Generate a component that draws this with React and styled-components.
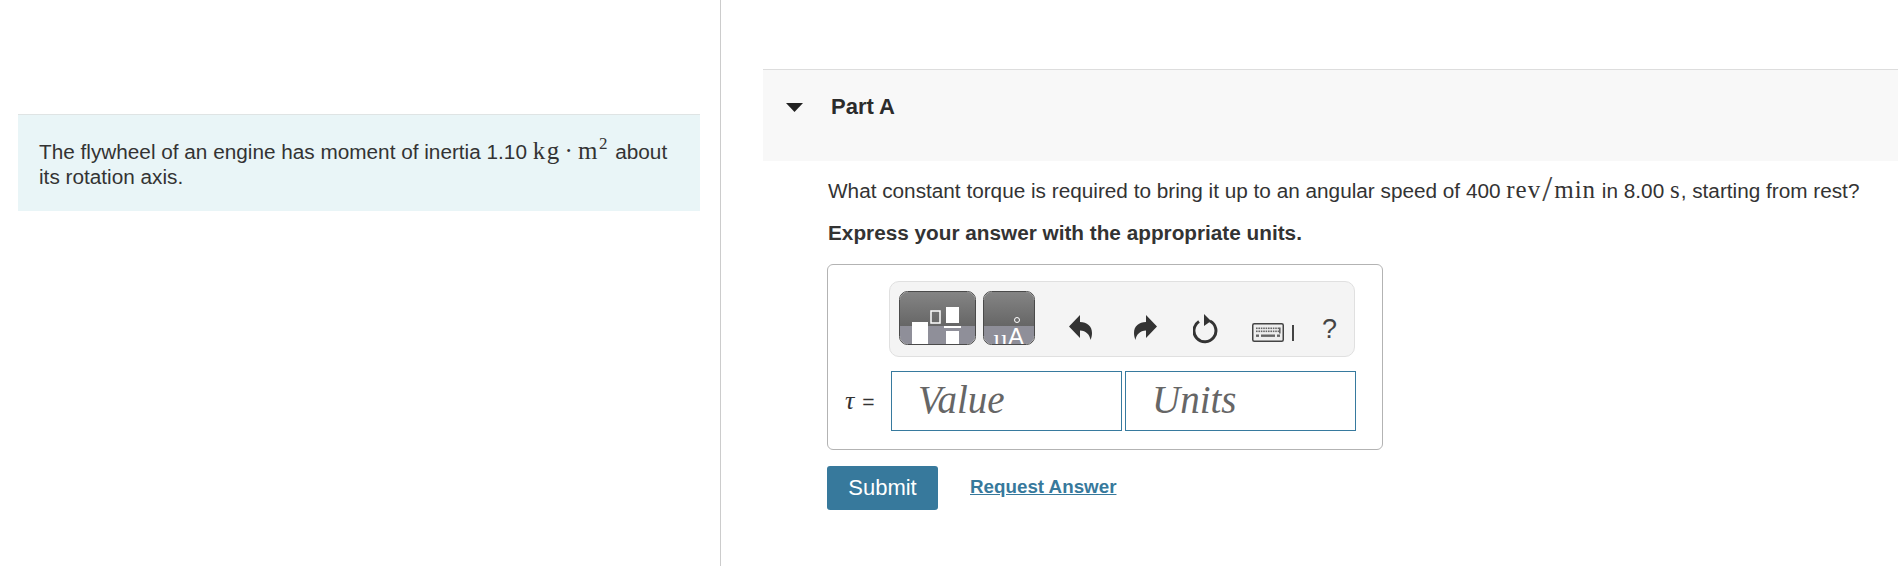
import styled, { createGlobalStyle } from 'styled-components';

const GlobalStyle = createGlobalStyle`
  html, body {
    margin: 0;
    padding: 0;
    background: #fff;
    overflow: hidden;
  }
  body {
    font-family: "Liberation Sans", Arial, sans-serif;
    color: #333;
  }
`;

const Page = styled.div`
  display: grid;
  grid-template-columns: 721px 1fr;
  height: 566px;
  width: 1898px;
`;

const LeftColumn = styled.section`
  border-right: 1px solid #ccc;
  padding: 114px 20px 0 18px;
`;

const Intro = styled.div`
  background: #e9f5f7;
  border-top: 1px solid #dfe4e4;
  height: 97px;
  box-sizing: border-box;
  padding: 24px 21px 0;
  font-size: 20.75px;
  line-height: 25px;
`;

const MathText = styled.span`
  font-family: "Liberation Serif", "Times New Roman", serif;
  font-size: 25px;
  letter-spacing: ${props => props.$spacing || '1px'};
  word-spacing: ${props => props.$wordSpacing || 0};
  line-height: 0;
`;

const Slash = styled.span`
  font-family: "Liberation Serif", serif;
  font-size: 36px;
  font-weight: 400;
  line-height: 0;
  color: #444;
  margin: 0 1px;
  vertical-align: -3px;
`;

const Sup = styled.sup`
  font-family: "Liberation Serif", serif;
  font-size: 17px;
  line-height: 0;
  vertical-align: 10px;
  margin-right: 2px;
`;

const RightColumn = styled.section`
  padding-top: 69px;
  padding-left: 42px;
`;

const PartHeader = styled.header`
  display: flex;
  align-items: flex-start;
  height: 92px;
  box-sizing: border-box;
  background: #f8f8f8;
  border-top: 1px solid #ddd;
  padding: 24px 0 0 23px;
`;

const Caret = styled.svg`
  width: 17px;
  height: 9px;
  margin-top: 9px;
  margin-right: 28px;
`;

const PartTitle = styled.h2`
  margin: 0;
  font-size: 22px;
  line-height: 26px;
  font-weight: 700;
  color: #2b2b2b;
`;

const PartBody = styled.div`
  padding: 17px 0 0 65px;
`;

const Question = styled.p`
  margin: 0;
  font-size: 20.75px;
  line-height: 25px;
  white-space: nowrap;
`;

const Instruction = styled.p`
  margin: 17px 0 0;
  font-size: 20.75px;
  line-height: 25px;
  font-weight: 700;
`;

const AnswerBox = styled.div`
  width: 556px;
  height: 186px;
  box-sizing: border-box;
  margin: 19px 0 0 -1px;
  border: 1px solid #b3b3b3;
  border-radius: 6px;
  padding: 16px 26px 0 61px;
`;

const Toolbar = styled.div`
  display: flex;
  align-items: flex-start;
  width: 466px;
  height: 76px;
  box-sizing: border-box;
  background: #f4f4f4;
  border: 1px solid #e0e0e0;
  border-radius: 10px;
  padding: 9px 0 0 9px;
`;

const ToolIcon = styled.svg`
  display: block;
  flex: none;
  margin-left: ${props => props.$left || 0}px;
  margin-top: ${props => props.$top || 0}px;
`;

const HelpMark = styled.span`
  margin-left: 28px;
  margin-top: 23px;
  font-size: 27px;
  line-height: 30px;
  color: #444;
`;

const InputRow = styled.div`
  position: relative;
  display: flex;
  gap: 3px;
  margin-top: 14px;
  margin-left: 2px;
`;

const Label = styled.span`
  position: absolute;
  left: -46px;
  top: 18px;
  font-size: 21px;
  line-height: 24px;
  white-space: nowrap;
`;

const Tau = styled.i`
  font-family: "Liberation Serif", serif;
  font-size: 26px;
  margin-right: 2px;
`;

const FieldBox = styled.div`
  width: 231px;
  height: 60px;
  box-sizing: border-box;
  flex: none;
  border: 1px solid #377a9e;
  padding-left: 26px;
  font-family: "Liberation Serif", "Times New Roman", serif;
  font-style: italic;
  font-size: 39px;
  line-height: 56px;
  color: #666;
`;

const Actions = styled.div`
  display: flex;
  align-items: center;
  margin: 16px 0 0 -1px;
`;

const SubmitButton = styled.button`
  width: 111px;
  height: 44px;
  border: 0;
  border-radius: 3px;
  background: #37799c;
  color: #fff;
  font-family: "Liberation Sans", Arial, sans-serif;
  font-size: 22px;
  padding: 0;
`;

const RequestLink = styled.a`
  margin-left: 32px;
  margin-top: -2px;
  color: #37799c;
  font-size: 18.8px;
  font-weight: 700;
  text-decoration: underline;
`;

function PaletteButton({ width, children, left }) {
  const id = `grad${width}`;
  return (
    <ToolIcon width={width} height="54" viewBox={`0 0 ${width} 54`} $left={left}>
      <defs>
        <linearGradient id={id} x1="0" y1="0" x2="0" y2="1">
          <stop offset="0" stopColor="#858585" />
          <stop offset="1" stopColor="#666" />
        </linearGradient>
        <clipPath id={`${id}c`}>
          <rect x="1" y="1" width={width - 2} height="52" rx="8" />
        </clipPath>
      </defs>
      <g clipPath={`url(#${id}c)`}>
        <rect width={width} height="35" fill={`url(#${id})`} />
        <rect y="35" width={width} height="19" fill="#8f8f99" />
        {children}
      </g>
      <rect x="0.5" y="0.5" width={width - 1} height="53" rx="8" fill="none" stroke="#4a4a4a" strokeWidth="1" />
    </ToolIcon>
  );
}

const undoPath = 'M0 11.5 L11 0 V7 C18 7 23 11 23 18 C23 20 22.5 23 21.5 25 C21 20 17 15.5 11 15.5 V23 Z';

function KeyboardIcon() {
  const keys = [];
  for (let i = 0; i < 10; i++) {
    keys.push(<rect key={`a${i}`} x={4 + i * 2.4} y="4.5" width="1.6" height="1.6" fill="#666" />);
    keys.push(<rect key={`b${i}`} x={4 + i * 2.4} y="7.5" width="1.6" height="1.6" fill="#666" />);
  }
  return (
    <ToolIcon width="32" height="19" viewBox="0 0 32 19" $left={33} $top={32}>
      <rect x="0.75" y="0.75" width="30.5" height="17.5" rx="1.5" fill="#eee" stroke="#444" strokeWidth="1.5" />
      {keys}
      <rect x="27" y="4.5" width="1.6" height="6" fill="#666" />
      <rect x="4" y="11.5" width="3" height="2.4" fill="#666" />
      <rect x="9" y="11.5" width="14" height="2.4" fill="#666" />
      <rect x="25" y="11.5" width="3" height="2.4" fill="#666" />
    </ToolIcon>
  );
}

export default function App() {
  return (
    <>
      <GlobalStyle />
      <Page>
        <LeftColumn>
          <Intro>
            The flywheel of an engine has moment of inertia 1.10 <MathText $spacing="1.5px" $wordSpacing="-4px">kg · m</MathText><Sup>2</Sup> about its rotation axis.
          </Intro>
        </LeftColumn>
        <RightColumn>
          <PartHeader>
            <Caret viewBox="0 0 17 9">
              <path d="M0 0 H17 L8.5 9 Z" fill="#222" />
            </Caret>
            <PartTitle>Part A</PartTitle>
          </PartHeader>
          <PartBody>
            <Question>
              What constant torque is required to bring it up to an angular speed of 400 <MathText>rev<Slash>/</Slash>min</MathText> in 8.00 <MathText>s</MathText>, starting from rest?
            </Question>
            <Instruction>Express your answer with the appropriate units.</Instruction>
            <AnswerBox>
              <Toolbar>
                <PaletteButton width={77}>
                  <rect x="13" y="31" width="16" height="23" fill="#fff" />
                  <rect x="32" y="20" width="9" height="12" fill="none" stroke="#fff" strokeWidth="1.5" />
                  <rect x="47" y="16" width="13" height="16" fill="#fff" />
                  <rect x="45" y="35" width="17" height="2" fill="#fff" />
                  <rect x="47" y="40" width="13" height="14" fill="#fff" />
                </PaletteButton>
                <PaletteButton width={52} left={7}>
                  <circle cx="34" cy="29" r="2.5" fill="none" stroke="#fff" strokeWidth="1" />
                  <text x="10" y="56" fontFamily="Liberation Serif, serif" fontSize="26" fill="#fff">µ</text>
                  <text x="25" y="54" fontFamily="Liberation Sans, sans-serif" fontSize="24" fill="#fff">A</text>
                </PaletteButton>
                <ToolIcon width="23" height="25" viewBox="0 0 23 25" $left={34} $top={24}>
                  <path d={undoPath} fill="#333" />
                </ToolIcon>
                <ToolIcon width="23" height="25" viewBox="0 0 23 25" $left={42} $top={24}>
                  <path d={undoPath} fill="#333" transform="matrix(-1 0 0 1 23 0)" />
                </ToolIcon>
                <ToolIcon width="26" height="30" viewBox="0 0 26 30" $left={36} $top={23}>
                  <path d="M17 7 A11 11 0 1 1 6 7.5" fill="none" stroke="#333" strokeWidth="3" />
                  <path d="M11 0 L18 7 L11 12 Z" fill="#333" />
                </ToolIcon>
                <KeyboardIcon />
                <ToolIcon width="2" height="16" viewBox="0 0 2 16" $left={8} $top={34}>
                  <rect width="2" height="16" fill="#444" />
                </ToolIcon>
                <HelpMark>?</HelpMark>
              </Toolbar>
              <InputRow>
                <Label><Tau>τ</Tau> =</Label>
                <FieldBox>Value</FieldBox>
                <FieldBox>Units</FieldBox>
              </InputRow>
            </AnswerBox>
            <Actions>
              <SubmitButton>Submit</SubmitButton>
              <RequestLink href="#">Request Answer</RequestLink>
            </Actions>
          </PartBody>
        </RightColumn>
      </Page>
    </>
  );
}
